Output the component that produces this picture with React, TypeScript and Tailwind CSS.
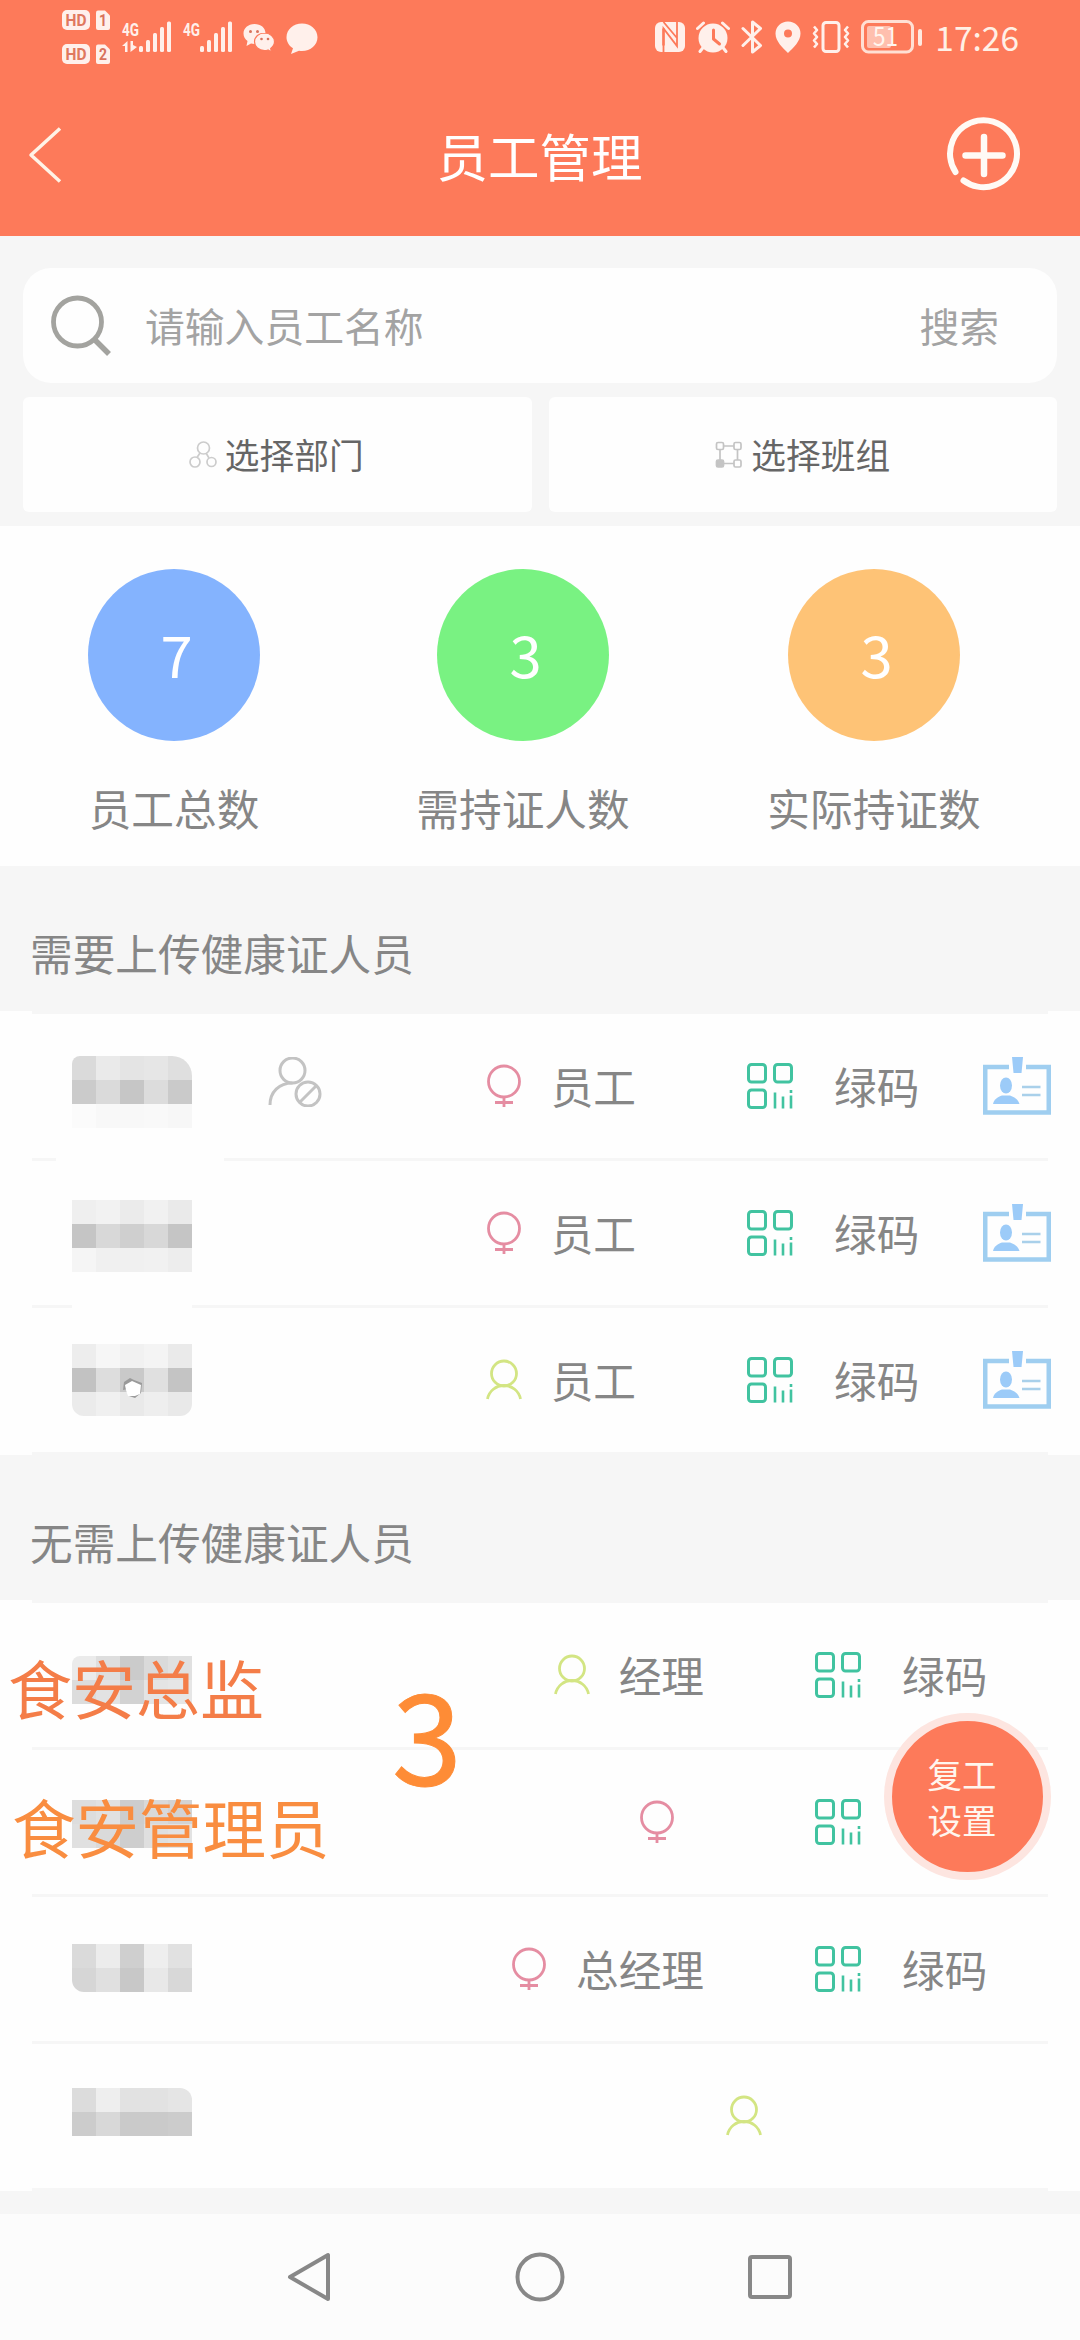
// src/App.tsx

import React from 'react';

type Gender = 'female' | 'male';

interface Employee {
  id: string;
  mosaic: string[];
  mosaicOffset: string;
  gender: Gender;
  role?: string;
  roleWidth: string;
  disabled?: boolean;
  hasCode?: boolean;
  codeLabel?: string;
  hasCard?: boolean;
  hole?: boolean;
  patch?: string;
}

const REQUIRED_STAFF: Employee[] = [
  {
    id: 'r1',
    mosaic: [
      '#dadada', '#eaeaea', '#e4e4e4', '#e6e6e6', '#dfdfdf',
      '#cbcbcb', '#dadada', '#c6c6c6', '#dcdcdc', '#cacaca',
      '#fbfbfb', '#f8f8f8', '#f8f8f8', '#f9f9f9', '#f7f7f7',
    ],
    mosaicOffset: 'mt-[42px] rounded-tl-lg rounded-tr-[20px]',
    gender: 'female',
    role: '员工',
    roleWidth: 'w-[604px]',
    disabled: true,
    hasCode: true,
    codeLabel: '绿码',
    hasCard: true,
    patch: 'left-[24px] w-[168px]',
  },
  {
    id: 'r2',
    mosaic: [
      '#efefef', '#f2f2f2', '#ebebeb', '#f1f1f1', '#eaeaea',
      '#c5c5c5', '#d8d8d8', '#cfcfcf', '#d8d8d8', '#c5c5c5',
      '#f5f5f5', '#f0f0f0', '#f0f0f0', '#f1f1f1', '#ededed',
    ],
    mosaicOffset: 'mt-[39px]',
    gender: 'female',
    role: '员工',
    roleWidth: 'w-[604px]',
    hasCode: true,
    codeLabel: '绿码',
    hasCard: true,
    patch: 'left-[40px] w-[120px]',
  },
  {
    id: 'r3',
    mosaic: [
      '#ededed', '#f6f6f6', '#f1f1f1', '#f4f4f4', '#eaeaea',
      '#c2c2c2', '#dddddd', '#c9c9c9', '#e0e0e0', '#c4c4c4',
      '#ebebeb', '#f0f0f0', '#e9e9e9', '#eeeeee', '#e9e9e9',
    ],
    mosaicOffset: 'mt-[36px] rounded-b-xl',
    gender: 'male',
    role: '员工',
    roleWidth: 'w-[604px]',
    hasCode: true,
    codeLabel: '绿码',
    hasCard: true,
    hole: true,
  },
];

const OPTIONAL_STAFF: Employee[] = [
  {
    id: 'o1',
    mosaic: [
      '#ebebeb', '#dedede', '#cbcbcb', '#dadada', '#e0e0e0',
      '#dcdcdc', '#e2e2e2', '#d2d2d2', '#e4e4e4', '#e6e6e6',
    ],
    mosaicOffset: 'mt-[53px] rounded-tl-lg',
    gender: 'male',
    role: '经理',
    roleWidth: 'w-[672px]',
    hasCode: true,
    codeLabel: '绿码',
  },
  {
    id: 'o2',
    mosaic: [
      '#dddddd', '#e1e1e1', '#cdcdcd', '#d9d9d9', '#d3d3d3',
      '#e0e0e0', '#dadada', '#cecece', '#dfdfdf', '#e2e2e2',
    ],
    mosaicOffset: 'mt-[50px]',
    gender: 'female',
    roleWidth: 'w-[672px]',
    hasCode: true,
  },
  {
    id: 'o3',
    mosaic: [
      '#dadada', '#ececec', '#cfcfcf', '#eeeeee', '#e1e1e1',
      '#d6d6d6', '#e0e0e0', '#c8c8c8', '#e8e8e8', '#d8d8d8',
    ],
    mosaicOffset: 'mt-[47px] rounded-bl-xl',
    gender: 'female',
    role: '总经理',
    roleWidth: 'w-[672px]',
    hasCode: true,
    codeLabel: '绿码',
  },
  {
    id: 'o4',
    mosaic: [
      '#dcdcdc', '#eeeeee', '#e2e2e2', '#e2e2e2', '#e5e5e5',
      '#cccccc', '#d8d8d8', '#cacaca', '#cacaca', '#cccccc',
    ],
    mosaicOffset: 'mt-[44px] rounded-tr-xl',
    gender: 'male',
    roleWidth: 'w-[759px]',
  },
];

const STATS = [
  { label: '员工总数', value: 7, color: 'bg-[#84b3fe]', cell: 'w-[348px]' },
  { label: '需持证人数', value: 3, color: 'bg-[#79f282]', cell: 'w-[350px]' },
  { label: '实际持证数', value: 3, color: 'bg-[#fec376]', cell: 'w-[352px]' },
];

const HdBadge: React.FC<{ sim: number }> = ({ sim }) => (
  <svg className="overflow-visible" width="48" height="20" viewBox="0 0 48 20" fontFamily="Roboto" fontWeight="700">
    <rect width="28" height="20" rx="5" fill="#fff0eb" />
    <text x="3.5" y="16" fontSize="17" textLength="21" lengthAdjust="spacingAndGlyphs" fill="#e0785f">HD</text>
    <path d="M36 0.5h7l5 5V18a2 2 0 0 1-2 2H36a2 2 0 0 1-2-2V2.500a2 2 0 0 1 2-2z" fill="#fff0eb" />
    <text x="37" y="16" fontSize="16" textLength="8" lengthAdjust="spacingAndGlyphs" fill="#d9735c">{sim}</text>
  </svg>
);

const Signal: React.FC<{ arrows?: boolean }> = ({ arrows }) => (
  <svg className="overflow-visible" width="50" height="32" viewBox="0 0 50 32" fill="#fff0eb">
    <text x="0" y="14.500" fontSize="19" fontFamily="Roboto" fontWeight="700" textLength="17" lengthAdjust="spacingAndGlyphs">4G</text>
    {arrows && <path d="M5.500 20v11H3v-6H0zM8.500 20H11v4l4 2-6.500 5z" />}
    <rect x="17" y="25" width="4" height="6" rx="1.500" />
    <rect x="24" y="19" width="4" height="12" rx="1.500" />
    <rect x="31" y="12" width="4" height="19" rx="1.500" />
    <rect x="38" y="6" width="4" height="25" rx="1.500" />
    <rect x="45" y="0.500" width="4" height="30.500" rx="1.500" />
  </svg>
);

const StatusBar: React.FC = () => (
  <div className="flex h-[74px] items-start pl-[62px] pr-[61px]">
    <div className="flex flex-col gap-[14px] pt-[10px]">
      <HdBadge sim={1} />
      <HdBadge sim={2} />
    </div>
    <div className="ml-3 flex gap-[11px] pt-[21px]">
      <Signal arrows />
      <Signal />
    </div>
    <div className="ml-[10px] flex gap-[10px] pt-[22px]">
      <svg width="33" height="31" viewBox="0 0 33 31">
        <path d="M11.500 2C5 2 .5 6.300.5 11.500c0 3.100 1.500 5.600 4 7.400L3.500 24l4.500-2.600c1 .3 2.300.5 3.500.5 6.300 0 11-4.500 11-10.400S17.800 2 11.500 2z" fill="#fff0eb" />
        <path d="M21.500 11c-5.600 0-10 3.900-10 8.800s4.400 8.800 10 8.800c1.200 0 2.400-.2 3.500-.6l3.500 2-.8-3.600c2.300-1.600 3.800-3.900 3.800-6.600 0-4.900-4.400-8.800-10-8.800z" fill="#fff0eb" stroke="#fd7a5a" strokeWidth="1.200" />
        <g fill="#d9735c">
          <circle cx="7.500" cy="9.500" r="1.500" /><circle cx="14.500" cy="9.500" r="1.500" />
          <circle cx="18.500" cy="17" r="1.300" /><circle cx="25" cy="17" r="1.300" />
        </g>
      </svg>
      <svg width="32" height="33" viewBox="0 0 32 33" fill="#fff0eb">
        <path d="M16 1.500C7.400 1.500.5 7.500.5 15.200c0 4.600 2.600 8.600 6.500 11.100L5 32l8-3.200c1 .2 2 .3 3 .3 8.600 0 15.500-6.200 15.500-13.900S24.600 1.500 16 1.500z" />
      </svg>
    </div>
    <div className="ml-auto flex items-center pt-[20px]">
      <svg width="30" height="32" viewBox="0 0 30 32">
        <rect y="1" width="30" height="30" rx="6" fill="#fff0eb" />
        <path d="M8.500 31V7.500L22 25V1M8.500 1 22 17" fill="none" stroke="#fd7a5a" strokeWidth="1.800" />
        <path d="M8.500 7.500v17" stroke="#fd7a5a" strokeWidth="2.500" />
      </svg>
      <svg className="ml-[11px]" width="34" height="32" viewBox="0 0 34 32">
        <circle cx="17" cy="17" r="14.500" fill="#fff0eb" />
        <path d="M1.500 7.500 7.500 2M32.500 7.500l-6-5.500M7.500 26l-3.500 4.500M26.500 26l3.500 4.500" stroke="#fff0eb" strokeWidth="3" strokeLinecap="round" />
        <path d="M17.500 9v9l6 5" fill="none" stroke="#fd7a5a" strokeWidth="3" strokeLinecap="round" strokeLinejoin="round" />
      </svg>
      <svg className="ml-[11px]" width="22" height="34" viewBox="0 0 22 34" fill="none" stroke="#fff0eb" strokeWidth="3" strokeLinecap="round" strokeLinejoin="round">
        <path d="M2 8.500 19.500 25.500 11.500 32V2l8 6.500L2 25.500" />
      </svg>
      <svg className="ml-[12px]" width="26" height="34" viewBox="0 0 26 34">
        <path fillRule="evenodd" fill="#fff0eb" d="M13 1.500C6 1.500.5 6.800.5 13.500.5 21.500 8 28 13 33c5-5 12.500-11.500 12.500-19.500C25.500 6.800 20 1.500 13 1.500zm0 8a4 4 0 1 1 0 8 4 4 0 0 1 0-8z" />
      </svg>
      <svg className="ml-[11px]" width="38" height="34" viewBox="0 0 38 34" fill="none" stroke="#fff0eb" strokeWidth="3" strokeLinejoin="round">
        <rect x="11" y="2.500" width="16" height="29" rx="3" />
        <path d="M2 6.500 5 10l-3 3.500L5 17l-3 3.500L5 24l-3 3.500M36 6.500 33 10l3 3.500-3 3.500 3 3.500-3 3.500 3 3.500" strokeWidth="2.600" />
      </svg>
      <svg className="ml-[11px] overflow-visible" width="62" height="34" viewBox="0 0 62 34">
        <rect x="1.500" y="1.500" width="50" height="30.500" rx="6" fill="none" stroke="#ffe0d4" strokeWidth="3" />
        <rect x="6" y="6" width="24" height="22" rx="2" fill="#ffbfae" />
        <text x="12" y="26" fontSize="26" fontFamily="Noto Sans CJK SC" fill="#fff6f0" textLength="25" lengthAdjust="spacingAndGlyphs">51</text>
        <rect x="57" y="9" width="4" height="17" rx="2" fill="#ffe9e0" />
      </svg>
      <span className="-mt-px ml-[12px] text-[33.5px] leading-[34px] text-[#fff0e6]">17:26</span>
    </div>
  </div>
);

const Header: React.FC = () => (
  <header className="h-[236px] bg-[#fd7a5a]">
    <StatusBar />
    <div className="flex h-[162px] items-center justify-between pl-[27px] pr-[58px]">
      <svg width="74" height="58" viewBox="0 0 74 58" fill="none" stroke="#fff3e6" strokeWidth="3.500" strokeLinejoin="round">
        <path d="M33 2.500 4 29l29 26.500" />
      </svg>
      <h1 className="-mt-px ml-[32px] text-[51.5px] leading-[60px] text-white">员工管理</h1>
      <svg width="76" height="76" viewBox="0 0 76 76" fill="none" stroke="#fffaf5" strokeWidth="6" strokeLinecap="round">
        <path d="M9.500 55A33.500 33.500 0 1 1 17.500 63.500" />
        <path d="M38 20v37M19.500 38.500h37" strokeWidth="6.500" />
      </svg>
    </div>
  </header>
);

const GenderIcon: React.FC<{ gender: Gender }> = ({ gender }) =>
  gender === 'female' ? (
    <svg className="shrink-0" width="36" height="44" viewBox="0 0 36 44" fill="none" stroke="#e58da2" strokeWidth="2.800">
      <circle cx="18" cy="17.500" r="15.500" />
      <path d="M18 33v10M9 38.500h18" />
    </svg>
  ) : (
    <svg className="shrink-0" width="36" height="44" viewBox="0 0 36 44" fill="none" stroke="#d3e583" strokeWidth="2.800">
      <circle cx="18" cy="15.500" r="12.500" />
      <path d="M1.500 41C3 33 10 27.500 18 27.500S33 33 34.500 41" />
    </svg>
  );

const QrIcon: React.FC = () => (
  <svg className="shrink-0" width="46" height="46" viewBox="0 0 46 46" fill="none" stroke="#41c3a0" strokeWidth="3">
    <rect x="1.500" y="1.500" width="17" height="17.500" rx="3" />
    <rect x="27.500" y="1.500" width="17" height="17.500" rx="3" />
    <rect x="1.500" y="27" width="17" height="17.500" rx="3" />
    <path d="M28 29.500v16M36 33.500v12M44 32.500v13M44 27v3" strokeWidth="2.600" />
  </svg>
);

const CardIcon: React.FC = () => (
  <svg className="shrink-0" width="68" height="58" viewBox="0 0 68 58">
    <path d="M26 10H2.250v45.500h63.500V10H43" fill="none" stroke="#9fcef0" strokeWidth="4.500" />
    <path d="M29 0h11l-1.500 16h-8z" fill="#9ccbf8" />
    <ellipse cx="23" cy="28.500" rx="6" ry="8" fill="#9ccbf8" />
    <path d="M10 47c1-5 5-7 9-8.500h8c4 1.500 8 3.500 9.500 8.500z" fill="#9ccbf8" />
    <path d="M39 30h18.500M39 38h18.500" stroke="#a9d0ea" strokeWidth="2.500" />
  </svg>
);

const DisabledUserIcon: React.FC = () => (
  <svg width="54" height="50" viewBox="0 0 54 50" fill="none" stroke="#c3c3c3" strokeWidth="3">
    <circle cx="24.500" cy="13.500" r="12.500" />
    <path d="M2 48C2 35 11 26 24.500 26" />
    <circle cx="40" cy="37" r="12" />
    <path d="m32 45 16-16" />
  </svg>
);

const StaffRow: React.FC<{ employee: Employee }> = ({ employee }) => (
  <li className="relative flex h-[147px] border-b-[3px] border-[#f6f6f6]">
    <div className={`flex h-full shrink-0 ${employee.roleWidth}`}>
      <div className={`relative ml-10 grid h-fit w-[120px] shrink-0 grid-cols-5 overflow-hidden ${employee.mosaicOffset}`}>
        {employee.mosaic.map((color, index) => (
          <span key={index} className="h-6" style={{ backgroundColor: color }} />
        ))}
        {employee.hole && (
          <svg className="absolute left-[50px] top-[34px]" width="22" height="22" viewBox="0 0 22 22">
            <path d="M2 4 8 0l4 2 8 3-1 10-6 5-6-2-1-7-5 1z" fill="#9a9a9a" />
            <path d="m3 7 7-4 9 4-1 9-5 2-7 0-2-6z" fill="#ffffff" />
          </svg>
        )}
      </div>
      {employee.disabled && (
        <div className="ml-[76px] pt-[43px]">
          <DisabledUserIcon />
        </div>
      )}
      <div className="ml-auto flex items-center">
        <GenderIcon gender={employee.gender} />
        <span className="ml-[29px] text-[42.67px] leading-[50px]">{employee.role}</span>
      </div>
    </div>
    {employee.hasCode && (
      <div className="ml-[111px] flex shrink-0 items-center">
        <QrIcon />
        {employee.codeLabel && <span className="ml-[41px] text-[42.67px] leading-[50px]">{employee.codeLabel}</span>}
      </div>
    )}
    {employee.hasCard && (
      <div className="ml-[64px] flex shrink-0 items-center">
        <CardIcon />
      </div>
    )}
    {employee.patch && <span className={`absolute -bottom-[3px] h-[3px] bg-[#fefefe] ${employee.patch}`} />}
  </li>
);

const StaffSection: React.FC<{ title: string; employees: Employee[] }> = ({ title, employees }) => (
  <section>
    <h2 className="flex h-[145px] items-center pl-[30px] pt-[29px] text-[42.67px] leading-[50px]">{title}</h2>
    <div className="bg-[#fefefe] px-8">
      <ul className="border-t-[3px] border-[#f6f6f6]">
        {employees.map((employee) => (
          <StaffRow key={employee.id} employee={employee} />
        ))}
      </ul>
    </div>
  </section>
);

export default function App() {
  return (
    <div className="relative flex h-[2340px] w-[1080px] flex-col overflow-hidden bg-[#f6f6f6] font-['Noto_Sans_CJK_SC',sans-serif] text-[#868686]">
      <Header />

      {/* Поиск и фильтры */}
      <div className="flex h-[290px] flex-col px-[23px] pt-8">
        <div className="flex h-[115px] items-center rounded-[28px] bg-[#fefefe] pl-[27px] pr-[58px]">
          <svg width="62" height="62" viewBox="0 0 62 62" fill="none" stroke="#a3a39f" strokeWidth="4.800">
            <circle cx="27.500" cy="27" r="24" />
            <path d="m44 44 15 15" strokeWidth="5.500" />
          </svg>
          <span className="-mt-0.5 ml-[33px] text-[39.800px] leading-[50px] text-[#a3a3a3]">请输入员工名称</span>
          <span className="-mt-0.5 ml-auto text-[39.800px] leading-[50px] text-[#a3a3a3]">搜索</span>
        </div>
        <div className="mt-[14px] grid h-[115px] grid-cols-2 gap-[17px]">
          <button className="flex items-center justify-center rounded-md bg-[#fefefe] pr-0.5 text-[34.700px] leading-[40px] text-[#666666]">
            <svg width="28" height="28" viewBox="0 0 28 28" fill="none" stroke="#cccccc" strokeWidth="1.700">
              <circle cx="14.500" cy="7" r="6" />
              <circle cx="6" cy="21" r="5" />
              <circle cx="22.500" cy="21" r="4.500" />
              <path d="m11 12-3 4.500M17 12l3 5" />
            </svg>
            <span className="-mt-0.5 ml-2">选择部门</span>
          </button>
          <button className="flex items-center justify-center rounded-md bg-[#fefefe] text-[34.700px] leading-[40px] text-[#666666]">
            <svg width="28" height="28" viewBox="0 0 28 28" fill="none" stroke="#c4c4c4" strokeWidth="1.700">
              <rect x="1.500" y="1.500" width="7" height="7" rx="1.500" />
              <rect x="19" y="1.500" width="7" height="7" rx="1.500" />
              <rect x="1.500" y="19" width="7" height="7" rx="1.500" fill="#c4c4c4" />
              <rect x="19" y="19" width="7" height="7" rx="1.500" />
              <path d="M8.500 5H19M8.500 22.500H19M5 8.500V19M22.500 8.500V19" />
            </svg>
            <span className="-mt-0.5 ml-2">选择班组</span>
          </button>
        </div>
      </div>

      {/* Статистика */}
      <div className="flex h-[340px] bg-[#fefefe] pt-[43px]">
        {STATS.map((stat) => (
          <div key={stat.label} className={`flex flex-col items-center ${stat.cell}`}>
            <div className={`flex h-[172px] w-[172px] items-center justify-center rounded-full pb-[4px] pl-[5px] text-[58px] leading-none text-white ${stat.color}`}>
              {stat.value}
            </div>
            <span className="mt-[42px] text-[42.67px] leading-[50px]">{stat.label}</span>
          </div>
        ))}
      </div>

      <StaffSection title="需要上传健康证人员" employees={REQUIRED_STAFF} />
      <StaffSection title="无需上传健康证人员" employees={OPTIONAL_STAFF} />

      {/* Подписи поверх списка */}
      <span className="absolute left-[8px] top-[1646px] text-[64px] leading-[80px] text-[#f47d48]">食安总监</span>
      <span className="absolute left-[12px] top-[1785px] text-[63.5px] leading-[80px] text-[#f98d40]">食安管理员</span>
      <span className="absolute left-[392px] top-[1665px] text-[126px] leading-[130px] text-[#fe8c36] [-webkit-text-stroke:1px_#fe8c36]">3</span>

      <button className="absolute left-[884px] top-[1713px] flex h-[167px] w-[167px] flex-col items-center justify-center rounded-full border-8 border-[#fde5e0] bg-[#fd7a5a] pb-0.5 pr-[11px] text-[34.5px] leading-[46px] text-[#fff6ee]">
        <span>复工</span>
        <span>设置</span>
      </button>

      {/* Системная навигация */}
      <nav className="mt-auto flex h-[126px] items-center justify-center gap-[181px] bg-[#fcfcfc]">
        <svg width="48" height="50" viewBox="0 0 48 50" fill="none" stroke="#888888" strokeWidth="4" strokeLinejoin="round">
          <path d="M42 3v44L4 25z" />
        </svg>
        <svg width="50" height="50" viewBox="0 0 50 50" fill="none" stroke="#888888" strokeWidth="4">
          <circle cx="25" cy="25" r="22.500" />
        </svg>
        <svg width="48" height="50" viewBox="0 0 48 50" fill="none" stroke="#888888" strokeWidth="4">
          <rect x="4" y="5" width="40" height="40" rx="2" />
        </svg>
      </nav>
    </div>
  );
}
